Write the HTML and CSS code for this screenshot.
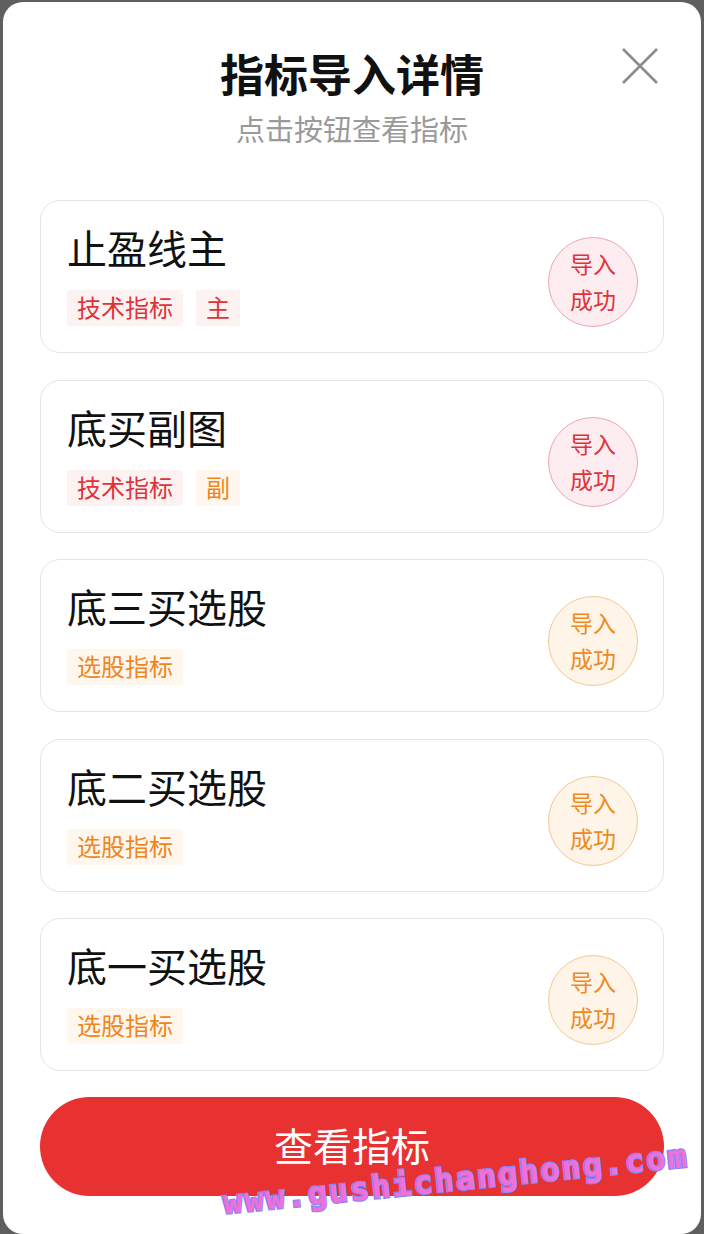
FILE: index.html
```html
<!DOCTYPE html>
<html lang="zh-CN">
<head>
    <meta charset="UTF-8">
    <meta name="viewport" content="width=device-width, initial-scale=1.0">
    <title>指标导入详情</title>
    <link rel="stylesheet" href="styles.css">
</head>
<body>
    <div class="modal">
        <a href="javascript:;" class="close">
            <svg width="38" height="38" viewBox="0 0 38 38">
                <path d="M2 2L36 36M36 2L2 36" stroke="#8c8c8c" stroke-width="2.6" fill="none"/>
            </svg>
        </a>
        <div class="head">
            <h1>指标导入详情</h1>
            <p>点击按钮查看指标</p>
        </div>
        <ul class="list">
            <li class="item">
                <div class="info">
                    <div class="name">止盈线主</div>
                    <div class="tags">
                        <span class="tag red">技术指标</span>
                        <span class="tag red">主</span>
                    </div>
                </div>
                <div class="badge red">导入<br>成功</div>
            </li>
            <li class="item">
                <div class="info">
                    <div class="name">底买副图</div>
                    <div class="tags">
                        <span class="tag red">技术指标</span>
                        <span class="tag orange">副</span>
                    </div>
                </div>
                <div class="badge red">导入<br>成功</div>
            </li>
            <li class="item">
                <div class="info">
                    <div class="name">底三买选股</div>
                    <div class="tags">
                        <span class="tag orange">选股指标</span>
                    </div>
                </div>
                <div class="badge orange">导入<br>成功</div>
            </li>
            <li class="item">
                <div class="info">
                    <div class="name">底二买选股</div>
                    <div class="tags">
                        <span class="tag orange">选股指标</span>
                    </div>
                </div>
                <div class="badge orange">导入<br>成功</div>
            </li>
            <li class="item">
                <div class="info">
                    <div class="name">底一买选股</div>
                    <div class="tags">
                        <span class="tag orange">选股指标</span>
                    </div>
                </div>
                <div class="badge orange">导入<br>成功</div>
            </li>
        </ul>
        <a href="javascript:;" class="btn">查看指标</a>
        <div class="mark">www.gushichanghong.com</div>
    </div>
</body>
</html>
```
FILE: styles.css
```css
*{
    margin: 0;
    padding: 0;
    list-style: none;
    text-decoration: none;
    box-sizing: border-box;
}
body{
    background-color: #5f5f5f;
    font-family: "Noto Sans CJK SC", "Noto Sans", sans-serif;
    padding: 2px 3px;
}
.modal{
    position: relative;
    background-color: #fff;
    border-radius: 20px;
    padding: 43px 37px 38px;
    overflow: hidden;
}
.close{
    position: absolute;
    right: 42px;
    top: 45px;
    width: 38px;
    height: 38px;
}
.head{
    text-align: center;
}
.head h1{
    font-size: 44px;
    line-height: 56px;
    font-weight: 700;
    color: #111;
}
.head p{
    margin-top: 7px;
    font-size: 29px;
    line-height: 40px;
    color: #9a9a9a;
}
.list{
    margin-top: 52px;
    display: flex;
    flex-direction: column;
    gap: 26.5px;
}
.item{
    display: flex;
    align-items: flex-end;
    justify-content: space-between;
    border: 1px solid #e4e4e4;
    border-radius: 20px;
    padding: 22px 25px 26px 26px;
}
.name{
    font-size: 40px;
    line-height: 48px;
    color: #111;
}
.tags{
    display: flex;
    gap: 13px;
    margin-top: 19px;
}
.tag{
    height: 36px;
    line-height: 33px;
    padding: 0 10px;
    font-size: 24px;
    border-radius: 3px;
}
.tag.red{
    color: #e0323a;
    background-color: #fdf2f2;
}
.tag.orange{
    color: #f0851c;
    background-color: #fff7ee;
}
.badge{
    width: 90px;
    height: 90px;
    margin-bottom: -1px;
    border-radius: 50%;
    border: 1px solid;
    display: flex;
    align-items: center;
    justify-content: center;
    text-align: center;
    font-size: 23px;
    line-height: 36px;
    padding-bottom: 2px;
}
.badge.red{
    color: #e0323a;
    background-color: #fdedf0;
    border-color: #e9a7b2;
}
.badge.orange{
    color: #ef8a22;
    background-color: #fef4e8;
    border-color: #f2c896;
}
.btn{
    display: block;
    margin-top: 26px;
    height: 99px;
    line-height: 95px;
    border-radius: 50px;
    background-color: #e83131;
    color: #fff;
    text-align: center;
    font-size: 39px;
}
.mark{
    position: absolute;
    left: 218px;
    top: 1182px;
    transform: rotate(-5.8deg);
    transform-origin: left top;
    font-family: "DejaVu Sans Mono", monospace;
    font-weight: 700;
    font-size: 32px;
    letter-spacing: 2px;
    color: #f070d6;
    -webkit-text-stroke: 2.5px #8b84ff;
    paint-order: stroke fill;
}
```
